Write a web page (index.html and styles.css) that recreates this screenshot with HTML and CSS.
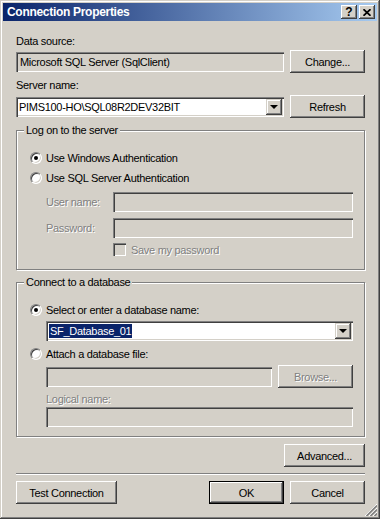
FILE: index.html
```html
<!DOCTYPE html>
<html lang="en">
<head>
    <meta charset="UTF-8">
    <meta name="viewport" content="width=device-width, initial-scale=1.0">
    <title>Connection Properties</title>
    <link rel="stylesheet" href="styles.css">
</head>
<body>
    <div class="window">
        <div class="titlebar">
            <span class="title">Connection Properties</span>
            <div class="caption">
                <span class="cap-btn help">?</span>
                <span class="cap-btn">
                    <svg width="8" height="7" viewBox="0 0 8 7"><path d="M0.5 0.2 L7.5 6.8 M7.5 0.2 L0.5 6.8" stroke="#000" stroke-width="1.7"/></svg>
                </span>
            </div>
        </div>

        <div class="content">
            <div class="label top">Data source:</div>
            <div class="row">
                <div class="textbox readonly main-field">Microsoft SQL Server (SqlClient)</div>
                <button class="btn">Change...</button>
            </div>

            <div class="label server">Server name:</div>
            <div class="row server-row">
                <div class="textbox combo main-field">
                    <span class="combo-text">PIMS100-HO\SQL08R2DEV32BIT</span>
                    <span class="drop"><span class="arrow"></span></span>
                </div>
                <button class="btn">Refresh</button>
            </div>

            <div class="group logon">
                <span class="group-title">Log on to the server</span>
                <div class="opt"><span class="radio on"></span>Use Windows Authentication</div>
                <div class="opt"><span class="radio"></span>Use SQL Server Authentication</div>
                <div class="field-row first">
                    <span class="field-label disabled">User name:</span>
                    <div class="textbox readonly grow"></div>
                </div>
                <div class="field-row second">
                    <span class="field-label disabled">Password:</span>
                    <div class="textbox readonly grow"></div>
                </div>
                <div class="check-row">
                    <span class="checkbox"></span>
                    <span class="disabled">Save my password</span>
                </div>
            </div>

            <div class="group database">
                <span class="group-title">Connect to a database</span>
                <div class="opt"><span class="radio on"></span>Select or enter a database name:</div>
                <div class="indent db-combo">
                    <div class="textbox combo grow">
                        <span class="combo-text"><span class="selected">SF_Database_01</span></span>
                        <span class="drop"><span class="arrow"></span></span>
                    </div>
                </div>
                <div class="opt attach"><span class="radio"></span>Attach a database file:</div>
                <div class="indent attach-row">
                    <div class="textbox readonly grow"></div>
                    <button class="btn disabled-btn"><span class="disabled">Browse...</span></button>
                </div>
                <div class="indent logical-label"><span class="disabled">Logical name:</span></div>
                <div class="indent logical-field">
                    <div class="textbox readonly grow"></div>
                </div>
            </div>

            <div class="advanced-row">
                <button class="btn advanced">Advanced...</button>
            </div>

            <div class="separator"></div>

            <div class="footer">
                <button class="btn test">Test Connection</button>
                <div class="footer-right">
                    <button class="btn default">OK</button>
                    <button class="btn">Cancel</button>
                </div>
            </div>
        </div>

        <svg class="grip" width="12" height="12" viewBox="0 0 12 12">
            <path d="M12 0 L0 12 M12 4 L4 12 M12 8 L8 12" stroke="#fff" stroke-width="1"/>
            <path d="M12 1.5 L1.5 12 M12 5.5 L5.5 12 M12 9.5 L9.5 12" stroke="#808080" stroke-width="1.6"/>
        </svg>
    </div>
</body>
</html>
```

FILE: styles.css
```css
body {
    margin: 0;
    font-family: "Liberation Sans", Arial, sans-serif;
    font-size: 11px;
    letter-spacing: -0.3px;
    color: #000;
    background-color: #d4d0c8;
}
.window {
    position: relative;
    width: 380px;
    height: 519px;
    box-sizing: border-box;
    padding: 3px;
    background-color: #d4d0c8;
    box-shadow: inset -1px -1px #404040, inset 1px 1px #d4d0c8, inset -2px -2px #808080, inset 2px 2px #fff;
}
.titlebar {
    height: 18px;
    display: flex;
    align-items: center;
    justify-content: space-between;
    padding: 0 2px 0 4px;
    background: linear-gradient(to right, #0a246a, #a6caf0);
}
.title {
    color: #fff;
    font-size: 12px;
    font-weight: bold;
}
.caption {
    display: flex;
    gap: 2px;
}
.cap-btn {
    width: 16px;
    height: 14px;
    display: flex;
    align-items: center;
    justify-content: center;
    background-color: #d4d0c8;
    box-shadow: inset -1px -1px #404040, inset 1px 1px #fff, inset -2px -2px #808080, inset 2px 2px #d4d0c8;
}
.help {
    font-weight: bold;
    font-size: 12px;
    letter-spacing: 0;
}
.content {
    padding: 0 12px 0 13px;
}
.label {
    line-height: 13px;
}
.label.top {
    margin-top: 14px;
}
.label.server {
    margin-top: 6px;
}
.row {
    display: flex;
    align-items: center;
    justify-content: space-between;
    height: 23px;
    margin-top: 2px;
}
.server-row {
    margin-top: 3px;
}
.textbox {
    height: 20px;
    box-sizing: border-box;
    display: flex;
    align-items: center;
    padding-left: 4px;
    background-color: #fff;
    box-shadow: inset 1px 1px #808080, inset 2px 2px #404040, inset -1px -1px #fff, inset -2px -2px #d4d0c8;
    white-space: nowrap;
}
.textbox.readonly {
    background-color: #d4d0c8;
}
.main-field {
    width: 268px;
}
.grow {
    flex: 1;
}
.combo {
    justify-content: space-between;
    padding: 2px 2px 2px 3px;
}
.combo-text {
    line-height: 14px;
}
.selected {
    background-color: #0a246a;
    color: #fff;
    padding: 0 1px;
    display: inline-block;
}
.drop {
    width: 16px;
    height: 16px;
    display: flex;
    align-items: center;
    justify-content: center;
    background-color: #d4d0c8;
    box-shadow: inset -1px -1px #404040, inset 1px 1px #d4d0c8, inset -2px -2px #808080, inset 2px 2px #fff;
}
.arrow {
    width: 0;
    height: 0;
    border-left: 4px solid transparent;
    border-right: 4px solid transparent;
    border-top: 4px solid #000;
}
.btn {
    width: 75px;
    height: 23px;
    padding: 0;
    border: none;
    font: inherit;
    letter-spacing: inherit;
    color: #000;
    background-color: #d4d0c8;
    box-shadow: inset -1px -1px #404040, inset 1px 1px #fff, inset -2px -2px #808080, inset 2px 2px #d4d0c8;
}
.btn.default {
    box-shadow: inset 0 0 0 1px #000, inset -2px -2px #404040, inset 2px 2px #fff, inset -3px -3px #808080;
}
.btn.advanced {
    width: 81px;
}
.btn.test {
    width: 101px;
}
.group {
    position: relative;
    box-sizing: border-box;
    margin-top: 12px;
    padding: 17px 11px 0 13px;
    border: 1px solid #808080;
    box-shadow: inset 1px 1px #fff, 1px 1px #fff;
}
.group.logon {
    height: 140px;
}
.group.database {
    height: 155px;
}
.group-title {
    position: absolute;
    top: -7px;
    left: 7px;
    padding: 0 2px;
    line-height: 13px;
    background-color: #d4d0c8;
}
.opt {
    display: flex;
    align-items: center;
    gap: 4px;
    height: 20px;
}
.opt.attach {
    margin-top: 3px;
}
.radio {
    width: 12px;
    height: 12px;
    box-sizing: border-box;
    border-radius: 50%;
    background-color: #fff;
    border: 1px solid;
    border-color: #808080 #fff #fff #808080;
    box-shadow: inset 1px 1px #404040, inset -1px -1px #d4d0c8;
    display: flex;
    align-items: center;
    justify-content: center;
}
.radio.on::after {
    content: "";
    width: 4px;
    height: 4px;
    border-radius: 50%;
    background-color: #000;
}
.field-row {
    display: flex;
    align-items: center;
    padding-left: 16px;
}
.field-row.first {
    margin-top: 4px;
}
.field-row.second {
    margin-top: 6px;
}
.field-label {
    width: 67px;
}
.disabled {
    color: #808080;
    text-shadow: 1px 1px #fff;
}
.check-row {
    display: flex;
    align-items: center;
    gap: 5px;
    margin-top: 5px;
    padding-left: 83px;
}
.checkbox {
    width: 13px;
    height: 13px;
    box-sizing: border-box;
    background-color: #d4d0c8;
    box-shadow: inset 1px 1px #808080, inset 2px 2px #404040, inset -1px -1px #fff, inset -2px -2px #d4d0c8;
}
.indent {
    display: flex;
    align-items: center;
    padding-left: 16px;
}
.db-combo {
    margin-top: 1px;
}
.attach-row {
    gap: 6px;
    height: 23px;
    margin-top: 1px;
}
.logical-label {
    line-height: 13px;
    margin-top: 5px;
}
.logical-field {
    margin-top: 1px;
}
.advanced-row {
    display: flex;
    justify-content: flex-end;
    margin-top: 7px;
}
.separator {
    margin-top: 6px;
    border-top: 1px solid #808080;
    border-bottom: 1px solid #fff;
}
.footer {
    display: flex;
    justify-content: space-between;
    margin-top: 6px;
}
.footer-right {
    display: flex;
    gap: 6px;
}
.grip {
    position: absolute;
    right: 3px;
    bottom: 3px;
}
```
